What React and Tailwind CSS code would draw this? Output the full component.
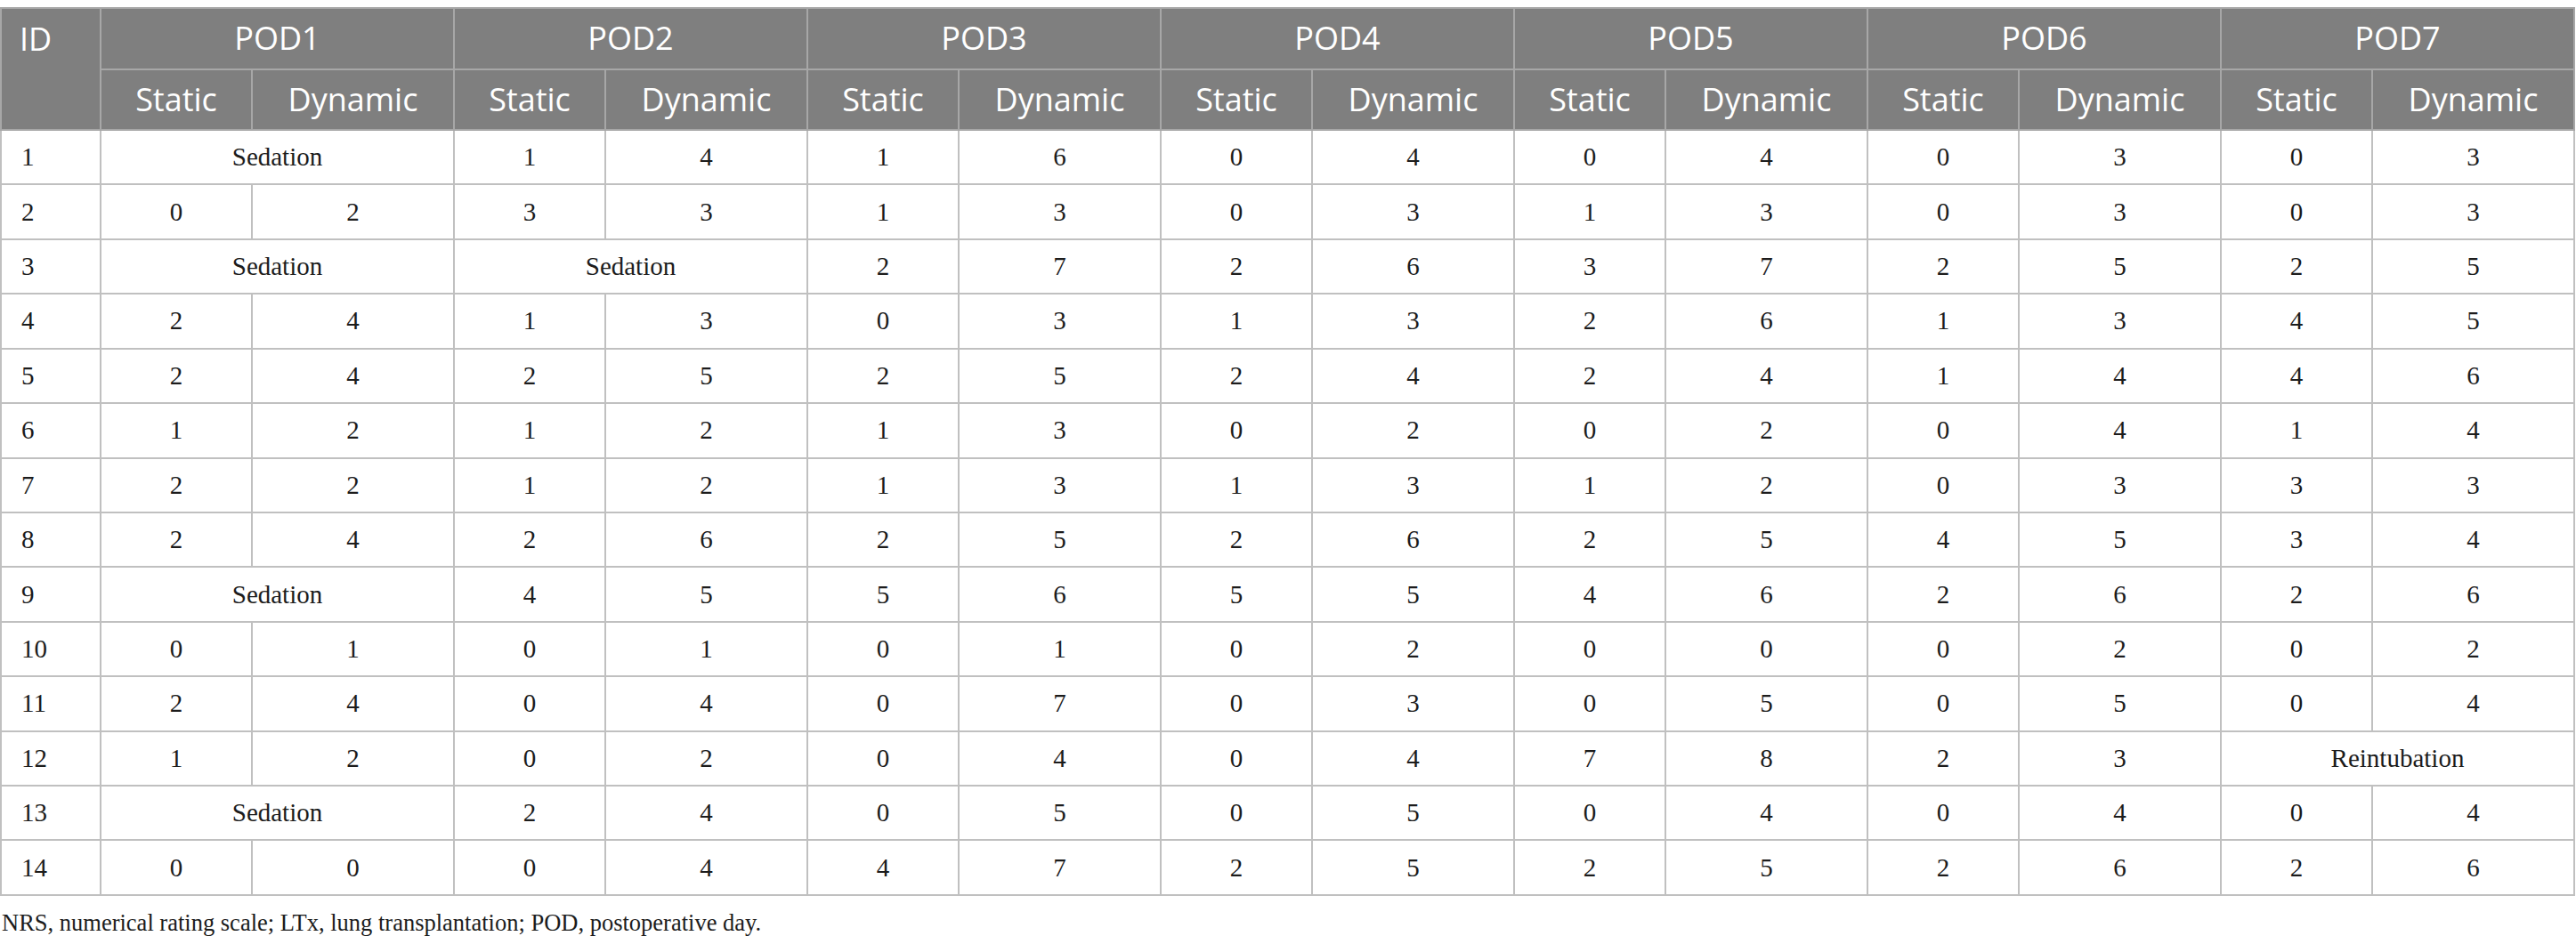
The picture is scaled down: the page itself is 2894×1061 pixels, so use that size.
import React from "react";

const rows = [
  ["1", "Sedation", [1, 4], [1, 6], [0, 4], [0, 4], [0, 3], [0, 3]],
  ["2", [0, 2], [3, 3], [1, 3], [0, 3], [1, 3], [0, 3], [0, 3]],
  ["3", "Sedation", "Sedation", [2, 7], [2, 6], [3, 7], [2, 5], [2, 5]],
  ["4", [2, 4], [1, 3], [0, 3], [1, 3], [2, 6], [1, 3], [4, 5]],
  ["5", [2, 4], [2, 5], [2, 5], [2, 4], [2, 4], [1, 4], [4, 6]],
  ["6", [1, 2], [1, 2], [1, 3], [0, 2], [0, 2], [0, 4], [1, 4]],
  ["7", [2, 2], [1, 2], [1, 3], [1, 3], [1, 2], [0, 3], [3, 3]],
  ["8", [2, 4], [2, 6], [2, 5], [2, 6], [2, 5], [4, 5], [3, 4]],
  ["9", "Sedation", [4, 5], [5, 6], [5, 5], [4, 6], [2, 6], [2, 6]],
  ["10", [0, 1], [0, 1], [0, 1], [0, 2], [0, 0], [0, 2], [0, 2]],
  ["11", [2, 4], [0, 4], [0, 7], [0, 3], [0, 5], [0, 5], [0, 4]],
  ["12", [1, 2], [0, 2], [0, 4], [0, 4], [7, 8], [2, 3], "Reintubation"],
  ["13", "Sedation", [2, 4], [0, 5], [0, 5], [0, 4], [0, 4], [0, 4]],
  ["14", [0, 0], [0, 4], [4, 7], [2, 5], [2, 5], [2, 6], [2, 6]],
];

const pods = ["POD1", "POD2", "POD3", "POD4", "POD5", "POD6", "POD7"];

const App = () => {
  return (
    <div className="w-[2894px] bg-white pt-[8px]">
      {/* Table Section */}
      <table className="table-fixed border-collapse w-[2893px] border-2 border-[#bfbfbf]">
        <colgroup>
          <col className="w-[112px]" />
          {pods.map((p) => (
            <React.Fragment key={p}>
              <col className="w-[170px]" />
              <col className="w-[227px]" />
            </React.Fragment>
          ))}
        </colgroup>
        <thead className="bg-[#7f7f7f] text-white font-['Open_Sans',sans-serif] text-[36px]">
          <tr className="h-[68.5px]">
            <th
              rowSpan={2}
              className="border-2 border-[#a7a7a7] align-top text-left font-normal pl-[20px] pt-[6px] leading-[56px]"
            >
              ID
            </th>
            {pods.map((p) => (
              <th
                key={p}
                colSpan={2}
                className="border-2 border-[#a7a7a7] font-normal leading-none"
              >
                {p}
              </th>
            ))}
          </tr>
          <tr className="h-[68.5px]">
            {pods.map((p) => (
              <React.Fragment key={p}>
                <th className="border-2 border-[#a7a7a7] font-normal leading-none">
                  Static
                </th>
                <th className="border-2 border-[#a7a7a7] font-normal leading-none">
                  Dynamic
                </th>
              </React.Fragment>
            ))}
          </tr>
        </thead>
        <tbody className="font-['Liberation_Serif',serif] text-[29px] text-[#1c1c1c]">
          {rows.map((row) => (
            <tr key={row[0]} className="h-[61.43px]">
              <td className="border-2 border-[#c0c0c0] pl-[22px] leading-none">
                {row[0]}
              </td>
              {row.slice(1).map((cell, i) =>
                typeof cell === "string" ? (
                  <td
                    key={i}
                    colSpan={2}
                    className="border-2 border-[#c0c0c0] text-center leading-none"
                  >
                    {cell}
                  </td>
                ) : (
                  <React.Fragment key={i}>
                    <td className="border-2 border-[#c0c0c0] text-center leading-none">
                      {cell[0]}
                    </td>
                    <td className="border-2 border-[#c0c0c0] text-center leading-none">
                      {cell[1]}
                    </td>
                  </React.Fragment>
                )
              )}
            </tr>
          ))}
        </tbody>
      </table>

      {/* Footnote Section */}
      <p className="mt-[14px] font-['Liberation_Serif',serif] text-[26.5px] leading-[32px] text-[#1c1c1c] pl-[2px]">
        NRS, numerical rating scale; LTx, lung transplantation; POD,
        postoperative day.
      </p>
    </div>
  );
};

export default App;
